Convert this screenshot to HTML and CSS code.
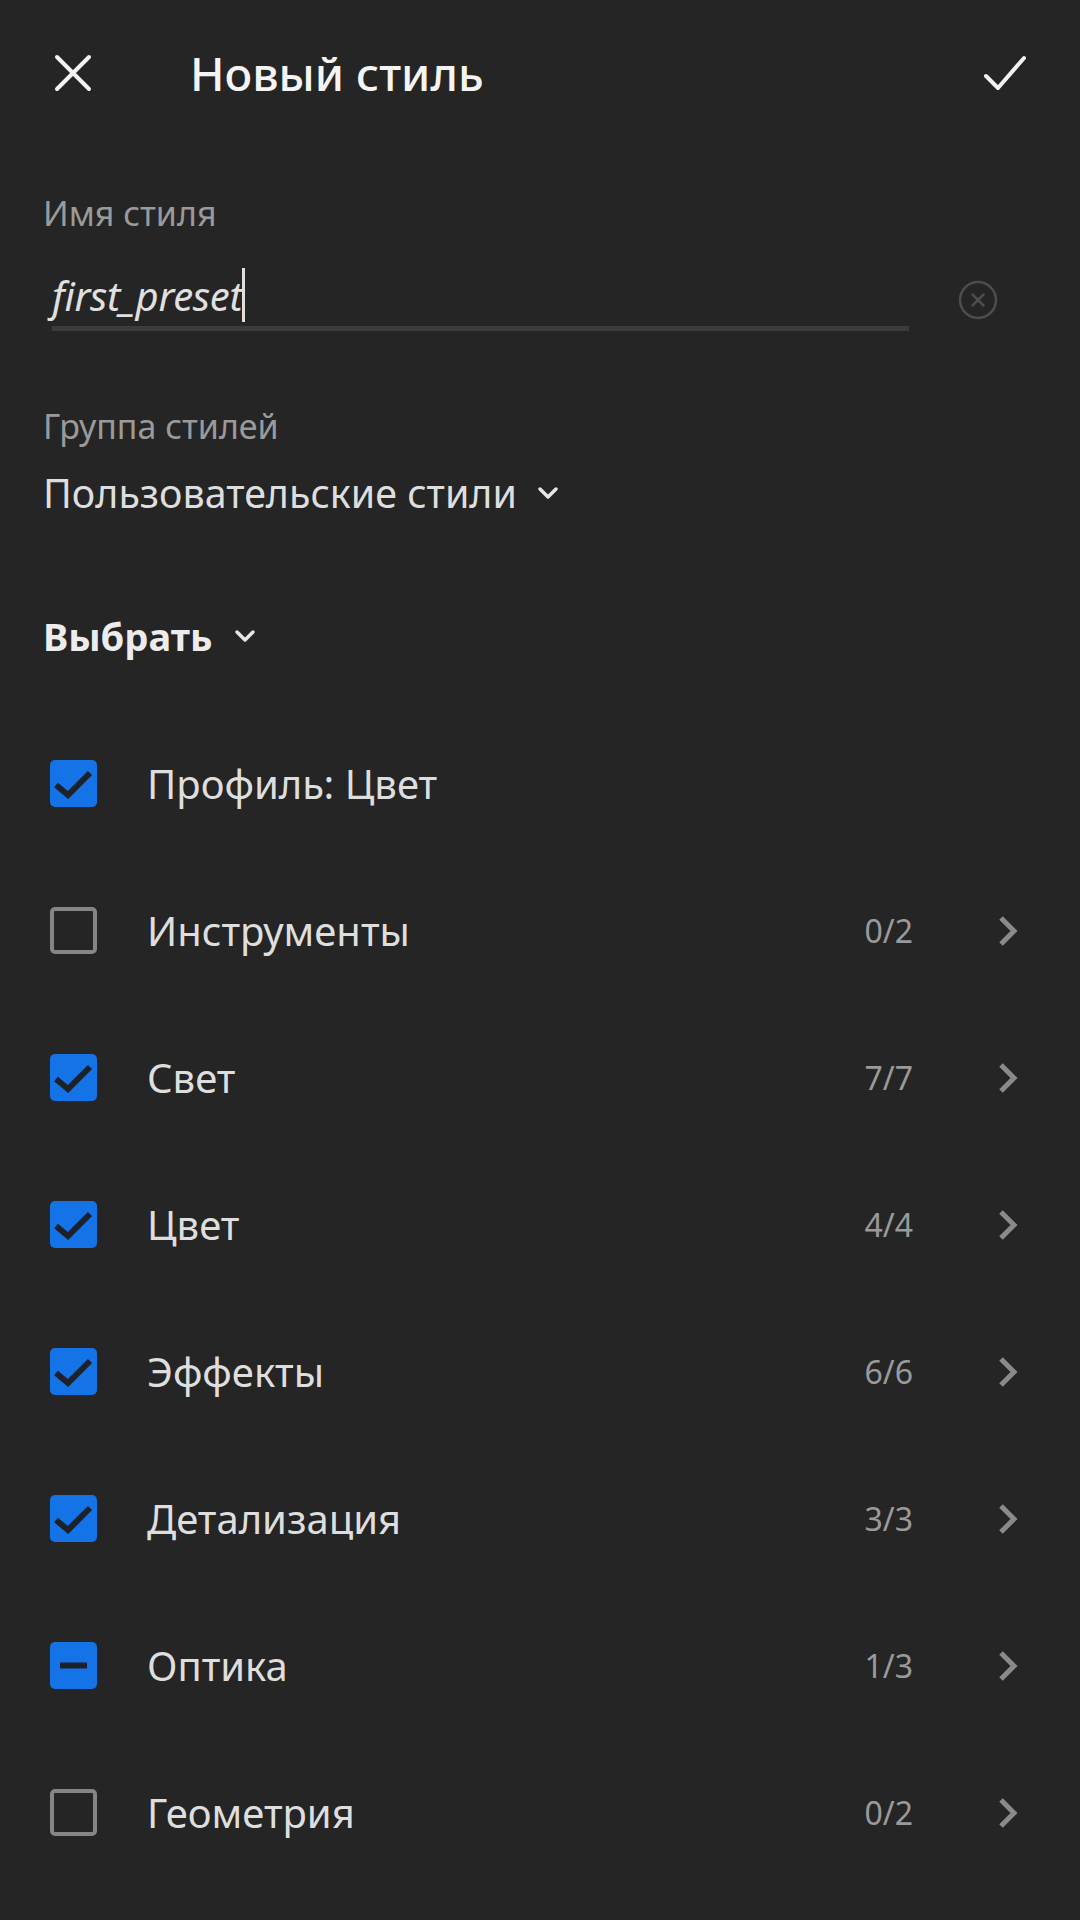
FILE: index.html
```html
<!DOCTYPE html>
<html lang="ru">
<head>
<meta charset="utf-8">
<title>Новый стиль</title>
<link rel="stylesheet" href="styles.css">
</head>
<body>
<div class="screen">
  <header class="topbar">
    <div class="icon-btn close-btn">
      <svg width="38" height="38" viewBox="0 0 38 38"><path d="M3 3 L35 35 M35 3 L3 35" stroke="#f2f2f2" stroke-width="4" stroke-linecap="round" fill="none"/></svg>
    </div>
    <h1 class="title">Новый стиль</h1>
    <div class="icon-btn done-btn">
      <svg width="44" height="36" viewBox="0 0 44 36"><path d="M3 21 L15 33 L41 3" stroke="#f2f2f2" stroke-width="4" stroke-linecap="round" stroke-linejoin="round" fill="none"/></svg>
    </div>
  </header>

  <section class="field name-field">
    <div class="field-label">Имя стиля</div>
    <div class="input-row">
      <div class="input">
        <span class="input-text">first_preset</span><span class="caret"></span>
      </div>
      <div class="clear-btn">
        <svg width="40" height="40" viewBox="0 0 40 40"><circle cx="20" cy="20" r="18" stroke="#4d4d4d" stroke-width="2.5" fill="none"/><path d="M14.5 14.5 L25.5 25.5 M25.5 14.5 L14.5 25.5" stroke="#4d4d4d" stroke-width="2.5" stroke-linecap="round"/></svg>
      </div>
    </div>
  </section>

  <section class="field group-field">
    <div class="field-label">Группа стилей</div>
    <div class="dropdown">
      <span class="dropdown-text">Пользовательские стили</span>
      <svg class="chev-down" width="22" height="15" viewBox="0 0 22 15"><path d="M3 3 L11 11 L19 3" stroke="#e6e6e6" stroke-width="3.5" stroke-linecap="round" stroke-linejoin="round" fill="none"/></svg>
    </div>
  </section>

  <section class="select">
    <span class="select-text">Выбрать</span>
    <svg class="chev-down" width="22" height="15" viewBox="0 0 22 15"><path d="M3 3 L11 11 L19 3" stroke="#e6e6e6" stroke-width="3.5" stroke-linecap="round" stroke-linejoin="round" fill="none"/></svg>
  </section>

  <ul class="list">
    <li class="row">
      <span class="box checked"><svg width="47" height="47" viewBox="0 0 47 47"><path d="M6 25 L18 35 L40 13" stroke="#1c212a" stroke-width="6" fill="none"/></svg></span>
      <span class="row-label">Профиль: Цвет</span>
    </li>
    <li class="row">
      <span class="box"></span>
      <span class="row-label">Инструменты</span>
      <span class="count">0/2</span>
      <svg class="chev-right" width="22" height="34" viewBox="0 0 22 34"><path d="M4 4 L17 17 L4 30" stroke="#8a8a8a" stroke-width="5" fill="none"/></svg>
    </li>
    <li class="row">
      <span class="box checked"><svg width="47" height="47" viewBox="0 0 47 47"><path d="M6 25 L18 35 L40 13" stroke="#1c212a" stroke-width="6" fill="none"/></svg></span>
      <span class="row-label">Свет</span>
      <span class="count">7/7</span>
      <svg class="chev-right" width="22" height="34" viewBox="0 0 22 34"><path d="M4 4 L17 17 L4 30" stroke="#8a8a8a" stroke-width="5" fill="none"/></svg>
    </li>
    <li class="row">
      <span class="box checked"><svg width="47" height="47" viewBox="0 0 47 47"><path d="M6 25 L18 35 L40 13" stroke="#1c212a" stroke-width="6" fill="none"/></svg></span>
      <span class="row-label">Цвет</span>
      <span class="count">4/4</span>
      <svg class="chev-right" width="22" height="34" viewBox="0 0 22 34"><path d="M4 4 L17 17 L4 30" stroke="#8a8a8a" stroke-width="5" fill="none"/></svg>
    </li>
    <li class="row">
      <span class="box checked"><svg width="47" height="47" viewBox="0 0 47 47"><path d="M6 25 L18 35 L40 13" stroke="#1c212a" stroke-width="6" fill="none"/></svg></span>
      <span class="row-label">Эффекты</span>
      <span class="count">6/6</span>
      <svg class="chev-right" width="22" height="34" viewBox="0 0 22 34"><path d="M4 4 L17 17 L4 30" stroke="#8a8a8a" stroke-width="5" fill="none"/></svg>
    </li>
    <li class="row">
      <span class="box checked"><svg width="47" height="47" viewBox="0 0 47 47"><path d="M6 25 L18 35 L40 13" stroke="#1c212a" stroke-width="6" fill="none"/></svg></span>
      <span class="row-label">Детализация</span>
      <span class="count">3/3</span>
      <svg class="chev-right" width="22" height="34" viewBox="0 0 22 34"><path d="M4 4 L17 17 L4 30" stroke="#8a8a8a" stroke-width="5" fill="none"/></svg>
    </li>
    <li class="row">
      <span class="box checked"><svg width="47" height="47" viewBox="0 0 47 47"><path d="M10 23.5 L37 23.5" stroke="#1c212a" stroke-width="6" fill="none"/></svg></span>
      <span class="row-label">Оптика</span>
      <span class="count">1/3</span>
      <svg class="chev-right" width="22" height="34" viewBox="0 0 22 34"><path d="M4 4 L17 17 L4 30" stroke="#8a8a8a" stroke-width="5" fill="none"/></svg>
    </li>
    <li class="row">
      <span class="box"></span>
      <span class="row-label">Геометрия</span>
      <span class="count">0/2</span>
      <svg class="chev-right" width="22" height="34" viewBox="0 0 22 34"><path d="M4 4 L17 17 L4 30" stroke="#8a8a8a" stroke-width="5" fill="none"/></svg>
    </li>
  </ul>
</div>
</body>
</html>
```

FILE: styles.css
```css
html, body {
  margin: 0;
  padding: 0;
  background: #252525;
}
body {
  font-family: "Noto Sans", "Open Sans", sans-serif;
  color: #dcdcdc;
}
.screen {
  width: 1080px;
  height: 1920px;
  overflow: hidden;
  background: #252525;
}
.topbar {
  display: flex;
  align-items: center;
  height: 146px;
}
.icon-btn {
  display: flex;
  align-items: center;
  justify-content: center;
  height: 146px;
}
.close-btn {
  width: 146px;
}
.done-btn {
  width: 150px;
  margin-left: auto;
}
.title {
  margin: 0 0 0 44px;
  font-size: 46px;
  font-weight: 500;
  color: #f4f4f4;
  line-height: 1;
}
.field {
  padding-left: 43px;
}
.field-label {
  font-size: 34px;
  color: #9a9a9a;
  line-height: 42px;
}
.name-field {
  margin-top: 46px;
}
.input-row {
  display: flex;
  align-items: center;
  padding-left: 9px;
  margin-top: 20px;
}
.input {
  width: 857px;
  height: 66px;
  border-bottom: 5px solid #3c3c3c;
  display: flex;
  align-items: flex-end;
  padding-bottom: 6px;
  box-sizing: content-box;
}
.input-text {
  font-style: italic;
  font-size: 40px;
  color: #e0e0e0;
  line-height: 48px;
  letter-spacing: -0.3px;
}
.caret {
  display: inline-block;
  width: 3px;
  height: 54px;
  background: #e0e0e0;
  margin-left: 0;
  align-self: flex-end;
  margin-bottom: -2px;
}
.clear-btn {
  margin-left: 49px;
  margin-top: 14px;
  display: flex;
}
.group-field {
  margin-top: 74px;
}
.dropdown {
  display: flex;
  align-items: center;
  margin-top: 18px;
}
.dropdown-text {
  font-size: 39.4px;
  line-height: 56px;
  color: #dedede;
}
.chev-down {
  margin-left: 20px;
}
.select {
  display: flex;
  align-items: center;
  padding-left: 43px;
  margin-top: 87px;
}
.select-text {
  font-size: 38px;
  font-weight: 700;
  line-height: 56px;
  color: #ececec;
}
.select .chev-down {
  margin-left: 22px;
}
.list {
  list-style: none;
  margin: 46px 0 0 0;
  padding: 0;
}
.row {
  display: flex;
  align-items: center;
  height: 147px;
  padding-right: 61px;
}
.box {
  width: 47px;
  height: 47px;
  box-sizing: border-box;
  border: 4px solid #858585;
  border-radius: 5px;
  margin-left: 50px;
  flex: none;
  display: flex;
}
.box.checked {
  border: none;
  background: #1473e6;
}
.row-label {
  margin-left: 50px;
  font-size: 40px;
  color: #dedede;
  flex: 1;
}
.count {
  font-size: 32px;
  color: #9a9a9a;
  margin-right: 84px;
}
.chev-right {
  flex: none;
}
```
